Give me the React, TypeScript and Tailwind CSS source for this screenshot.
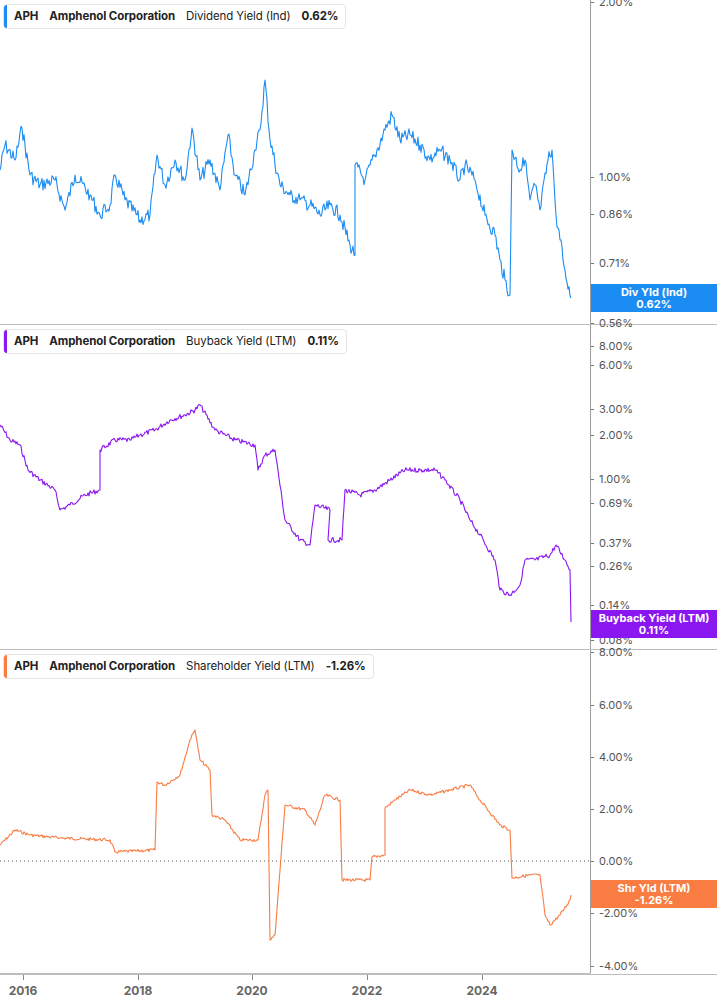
const blue = [[0,170],[5,145],[15,160],[22,128],[30,175],[40,185],[55,180],[65,210],[75,175],[90,195],[100,215],[110,205],[115,175],[125,200],[140,220],[150,215],[157,155],[165,185],[175,160],[185,180],[192,128],[200,180],[210,160],[220,190],[228,135],[235,175],[245,195],[255,150],[260,130],[265,80],[270,140],[280,185],[290,195],[300,200],[310,205],[320,215],[330,205],[340,215],[350,245],[355,255],[355,165],[365,180],[375,155],[385,130],[392,115],[400,140],[410,135],[420,145],[430,160],[440,150],[450,160],[460,180],[465,165],[475,180],[485,215],[495,235],[500,260],[505,280],[510,295],[512,150],[520,170],[525,160],[530,200],[535,185],[540,210],[548,160],[552,150],[556,215],[560,240],[565,270],[571,298]];
const purple = [[0,425],[10,440],[20,445],[28,470],[40,480],[55,490],[60,510],[70,505],[85,495],[100,490],[100,450],[115,440],[130,440],[140,435],[155,430],[170,420],[185,415],[195,410],[200,405],[215,430],[235,440],[255,445],[258,470],[265,455],[275,450],[285,520],[300,540],[310,545],[315,505],[330,510],[328,540],[342,540],[345,490],[360,495],[375,490],[390,480],[405,470],[420,470],[435,470],[445,480],[460,500],[470,520],[480,535],[495,560],[500,590],[510,595],[520,585],[525,560],[535,560],[550,555],[556,545],[565,560],[570,570],[571,622]];
const orange = [[0,845],[15,830],[30,835],[60,838],[110,840],[115,852],[155,850],[157,782],[165,785],[180,775],[190,740],[195,730],[200,760],[210,770],[212,815],[225,820],[240,840],[258,840],[265,795],[268,790],[270,940],[275,935],[285,805],[305,810],[315,825],[325,795],[340,800],[342,880],[370,880],[372,857],[385,855],[385,808],[395,800],[410,790],[430,795],[450,790],[470,785],[480,800],[500,825],[510,830],[512,878],[530,875],[540,875],[545,915],[550,925],[560,915],[570,900],[571,895]];

// deterministic jitter so the lines look like daily data
function noisy(pts: number[][], amp: number, top: number) {
  const out: string[] = [];
  let s = 7;
  for (let i = 0; i < pts.length - 1; i++) {
    const [x1, y1] = pts[i];
    const [x2, y2] = pts[i + 1];
    const steps = Math.max(1, Math.round(x2 - x1));
    for (let k = 0; k < steps; k++) {
      s = (s * 9301 + 49297) % 233280;
      const t = k / steps;
      const j = k === 0 ? 0 : (s / 233280 - 0.5) * amp;
      out.push(`${x1 + (x2 - x1) * t},${y1 + (y2 - y1) * t + j - top}`);
    }
  }
  const last = pts[pts.length - 1];
  out.push(`${last[0]},${last[1] - top}`);
  return out.join(" ");
}

type Tick = [string, number];

function Panel({ top, pts, color, amp, metric, value, flag, flagY, ticks, zero }: {
  top: number; pts: number[][]; color: string; amp: number; metric: string; value: string;
  flag: string; flagY: number; ticks: Tick[]; zero?: number;
}) {
  return (
    <div className="relative flex h-[325px] border-b border-[#bdbdbd]">
      <div className="relative w-[590px]">
        <svg className="absolute inset-0" width="590" height="325">
          {zero !== undefined && (
            <line x1="0" x2="590" y1={zero - top} y2={zero - top} stroke="#555" strokeDasharray="1 3" />
          )}
          <polyline points={noisy(pts, amp, top)} fill="none" stroke={color} strokeWidth="1.1" strokeLinejoin="round" />
        </svg>
        <div className="absolute left-[3px] top-[4px] flex items-center gap-[11px] rounded border border-[#e5e5e5] bg-white py-[3px] pl-[10px] pr-[7px] text-[11.5px] tracking-[-0.1px] text-[#222]">
          <div className="absolute left-0 top-0 bottom-0 w-[3px] rounded-l" style={{ background: color }} />
          <span className="font-bold">APH</span>
          <span className="font-bold">Amphenol Corporation</span>
          <span>{metric}</span>
          <span className="font-bold">{value}</span>
        </div>
      </div>
      <div className="relative flex-1 border-l border-[#9e9e9e]">
        {ticks.map(([t, y]) => (
          <div key={t} className="absolute left-0 flex items-center text-[11px] text-[#555]" style={{ top: y - top - 8 }}>
            <span className="mr-[5px] h-[1px] w-[3px] bg-[#777]" />
            {t}
          </div>
        ))}
        <div className="absolute left-0 right-0 flex flex-col items-center py-[2px] text-[11px] font-bold leading-[12px] text-white" style={{ top: flagY - top, background: color }}>
          <span>{flag}</span>
          <span>{value}</span>
        </div>
      </div>
    </div>
  );
}

export default function App() {
  return (
    <div className="h-[1005px] w-[717px] overflow-hidden bg-white" style={{ fontFamily: "Inter, 'Liberation Sans', sans-serif" }}>
      <Panel top={0} pts={blue} color="#1b8cf2" amp={14} metric="Dividend Yield (Ind)" value="0.62%" flag="Div Yld (Ind)" flagY={284}
        ticks={[["2.00%", 2], ["1.00%", 177], ["0.86%", 214], ["0.71%", 263], ["0.56%", 323]]} />
      <Panel top={325} pts={purple} color="#8b17f0" amp={5} metric="Buyback Yield (LTM)" value="0.11%" flag="Buyback Yield (LTM)" flagY={610}
        ticks={[["8.00%", 346], ["6.00%", 365], ["3.00%", 409], ["2.00%", 435], ["1.00%", 479], ["0.69%", 503], ["0.37%", 543], ["0.26%", 566], ["0.14%", 605], ["0.08%", 640]]} />
      <Panel top={650} pts={orange} color="#f97c42" amp={3} metric="Shareholder Yield (LTM)" value="-1.26%" flag="Shr Yld (LTM)" flagY={880} zero={861}
        ticks={[["8.00%", 652], ["6.00%", 705], ["4.00%", 757], ["2.00%", 809], ["0.00%", 861], ["-2.00%", 913], ["-4.00%", 966]]} />
      <div className="relative h-[30px] w-[591px] border-t-2 border-[#bdbdbd] -mt-[2px]">
        {[["2016", 23], ["2018", 138], ["2020", 252], ["2022", 367], ["2024", 482]].map(([l, x]) => (
          <div key={l} className="absolute top-0 flex flex-col items-center" style={{ left: (x as number) - 20, width: 40 }}>
            <span className="h-[5px] w-[1px] bg-[#888]" />
            <span className="mt-[2px] text-[12px] font-bold text-[#666]">{l}</span>
          </div>
        ))}
      </div>
    </div>
  );
}
